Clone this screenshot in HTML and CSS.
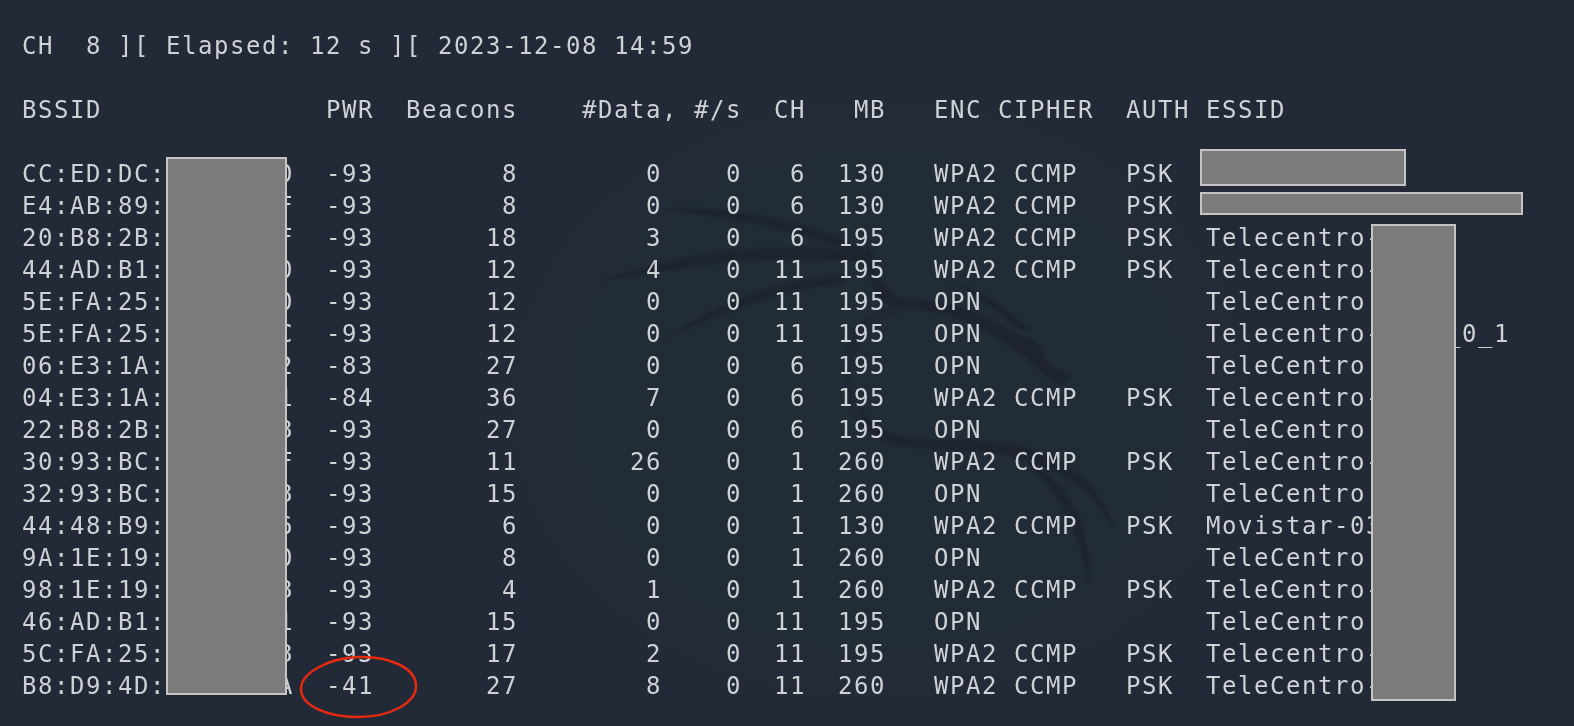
FILE: index.html
```html
<!DOCTYPE html>
<html lang="en">
<head>
<meta charset="utf-8">
<title>airodump-ng</title>
<link rel="stylesheet" href="styles.css">
</head>
<body>
<main class="screen">
<svg class="dragon" viewBox="0 0 1574 726" aria-hidden="true">
  <path d="M664 209C705 206 750 212 790 222C820 230 850 240 872 254L864 257C835 244 800 234 765 226C730 219 695 214 664 209Z"/>
  <path d="M600 281C640 267 690 254 740 250C790 246 835 248 872 252L871 262C830 259 785 257 735 262C690 266 640 274 600 281Z"/>
  <path d="M664 339C690 322 720 305 755 293C785 282 815 278 845 274L846 283C815 286 790 291 762 300C725 312 695 325 664 339Z"/>
  <path d="M866 240C872 255 873 265 878 276C884 288 892 296 905 299C925 300 945 301 965 309C985 317 1005 328 1022 336C1032 340 1040 344 1042 352C1044 360 1050 368 1073 375L1060 385C1045 378 1035 366 1025 357C1005 342 980 327 955 317C935 310 915 310 900 310C885 306 875 296 871 282C868 268 866 254 866 240Z"/>
  <path d="M950 280C970 287 990 297 1006 310C1016 318 1026 326 1032 332L1020 330C1005 316 985 301 968 292C962 288 956 284 950 280Z"/>
  <path class="faint" d="M930 309C905 309 885 314 870 328C855 345 849 370 851 395C853 412 862 424 875 432L882 438C866 432 852 418 846 398C840 370 846 340 862 322C880 306 905 303 930 309Z"/>
  <path d="M856 398C862 415 875 428 895 435C925 442 965 438 1005 443C1040 448 1070 463 1090 485C1103 500 1110 515 1113 530C1105 512 1093 497 1075 483C1053 468 1025 458 995 453C960 449 925 451 892 444C872 438 860 420 856 398Z"/>
  <path d="M1024 460C1050 473 1070 493 1080 520C1087 540 1090 562 1088 586C1084 560 1078 535 1066 513C1055 492 1040 475 1024 460Z"/>
</svg>
<pre class="terminal">CH  8 ][ Elapsed: 12 s ][ 2023-12-08 14:59

BSSID              PWR  Beacons    #Data, #/s  CH   MB   ENC CIPHER  AUTH ESSID

CC:ED:DC:XX:XX:X0  -93        8        0    0   6  130   WPA2 CCMP   PSK  XXXXXXXX
E4:AB:89:XX:XX:XF  -93        8        0    0   6  130   WPA2 CCMP   PSK  XXXXXXXXXXXX
20:B8:2B:XX:XX:XF  -93       18        3    0   6  195   WPA2 CCMP   PSK  Telecentro-XXXX
44:AD:B1:XX:XX:X0  -93       12        4    0  11  195   WPA2 CCMP   PSK  Telecentro-XXXX
5E:FA:25:XX:XX:X0  -93       12        0    0  11  195   OPN              TeleCentro XXXX
5E:FA:25:XX:XX:XC  -93       12        0    0  11  195   OPN              Telecentro-XXXX_0_1
06:E3:1A:XX:XX:X2  -83       27        0    0   6  195   OPN              TeleCentro XXXX
04:E3:1A:XX:XX:X1  -84       36        7    0   6  195   WPA2 CCMP   PSK  Telecentro-XXXX
22:B8:2B:XX:XX:X8  -93       27        0    0   6  195   OPN              TeleCentro XXXX
30:93:BC:XX:XX:XF  -93       11       26    0   1  260   WPA2 CCMP   PSK  TeleCentro-XXXX
32:93:BC:XX:XX:X8  -93       15        0    0   1  260   OPN              TeleCentro XXXX
44:48:B9:XX:XX:X6  -93        6        0    0   1  130   WPA2 CCMP   PSK  Movistar-03XXX
9A:1E:19:XX:XX:X0  -93        8        0    0   1  260   OPN              TeleCentro XXXX
98:1E:19:XX:XX:X8  -93        4        1    0   1  260   WPA2 CCMP   PSK  TeleCentro-XXXX
46:AD:B1:XX:XX:X1  -93       15        0    0  11  195   OPN              TeleCentro XXXX
5C:FA:25:XX:XX:X8  -93       17        2    0  11  195   WPA2 CCMP   PSK  Telecentro-XXXX
B8:D9:4D:XX:XX:XA  -41       27        8    0  11  260   WPA2 CCMP   PSK  TeleCentro-XXXX</pre>
<div class="mask mask-bssid"></div>
<div class="mask mask-essid-a"></div>
<div class="mask mask-essid-b"></div>
<div class="mask mask-essid-c"></div>
<svg class="circle" viewBox="0 0 120 64" aria-hidden="true">
  <path d="M3 33C4 18 30 3 60 2C92 1 117 13 118 30C119 48 92 62 60 62C28 62 2 50 3 33Z"/>
</svg>
</main>
</body>
</html>
```
FILE: styles.css
```css
html, body {
  margin: 0;
  height: 100%;
  background: #232a37;
}
.screen {
  position: relative;
  width: 1574px;
  height: 726px;
  overflow: hidden;
  background: radial-gradient(ellipse 420px 340px at 880px 400px, #222c37 0%, #222c37 70%, #232a37 100%);
}
.terminal {
  position: relative;
  margin: 0;
  padding: 30px 0 0 22px;
  font-family: "DejaVu Sans Mono", "Liberation Mono", monospace;
  font-size: 24px;
  line-height: 32px;
  letter-spacing: 1.55px;
  color: #ced2d6;
  filter: blur(0.35px);
}
.dragon {
  position: absolute;
  left: 0;
  top: 0;
  width: 1574px;
  height: 726px;
  fill: #1d2430;
  filter: blur(1.2px);
}
.dragon .faint {
  fill: #1f2834;
}
.mask {
  position: absolute;
  box-sizing: border-box;
  background: #7b7b7b;
  border: 2px solid #c4c4c4;
  filter: blur(0.35px);
}
.mask-bssid { left: 166px; top: 157px; width: 121px; height: 538px; }
.mask-essid-a { left: 1200px; top: 149px; width: 206px; height: 37px; }
.mask-essid-b { left: 1200px; top: 192px; width: 323px; height: 23px; }
.mask-essid-c { left: 1371px; top: 224px; width: 85px; height: 477px; }
.circle {
  position: absolute;
  left: 298px;
  top: 655px;
  width: 120px;
  height: 64px;
  fill: none;
  stroke: #e62a10;
  stroke-width: 2.5px;
}
```
